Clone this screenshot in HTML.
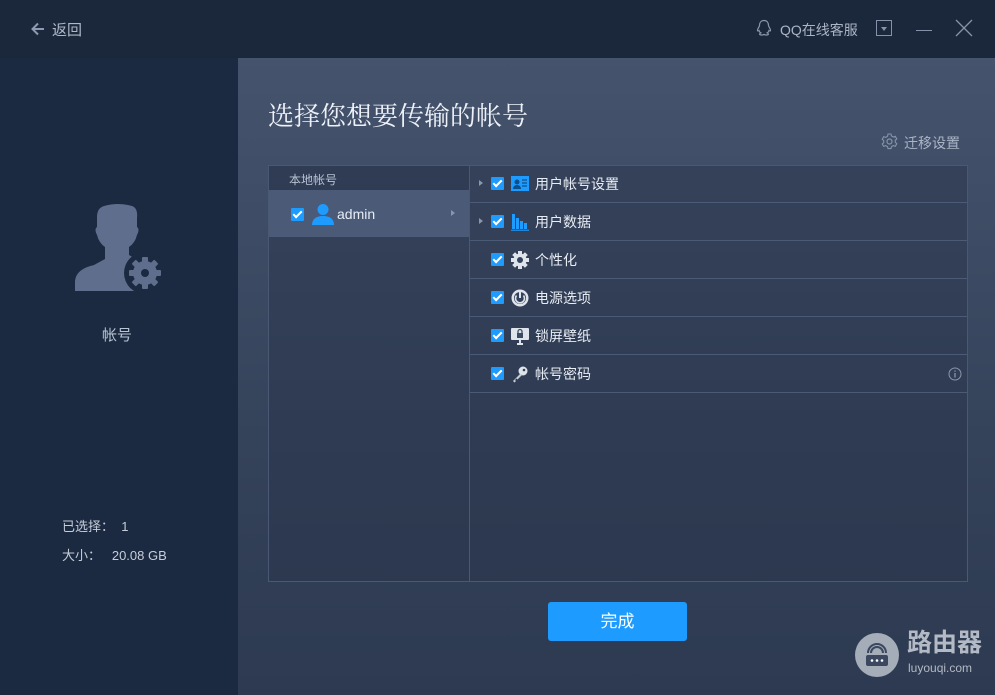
<!DOCTYPE html><html><head><meta charset="utf-8"><style>
*{margin:0;padding:0;box-sizing:border-box}
body{width:995px;height:695px;overflow:hidden;background:#1b273b;font-family:"Liberation Sans","Noto Sans CJK SC",sans-serif;position:relative;color:#fff}
.abs{position:absolute}
.panel{left:238px;top:58px;width:757px;height:637px;background:linear-gradient(#45536d,#34425a 60%,#2d3a51)}
.side{left:0;top:58px;width:238px;height:637px;background:#1b2a41}
.tbl{left:268px;top:165px;width:700px;height:417px;border:1px solid #4a5874;background:rgba(40,52,74,.45)}
.cb{display:inline-block;width:13px;height:13px;background:#1e9bff;border-radius:1px;position:relative}
.cb:after{content:"";position:absolute;left:4px;top:1px;width:3px;height:7px;border:solid #fff;border-width:0 2px 2px 0;transform:rotate(45deg)}
.row{position:absolute;left:201px;width:497px;height:38px;border-bottom:1px solid #4b5a75;font-size:14px;color:#e8edf5}
.row .cb{position:absolute;left:21px;top:12px}
.row .ic{position:absolute;left:41px;top:10px;width:18px;height:18px}
.row .t{position:absolute;left:65px;top:9px}
.tri{position:absolute;left:9px;top:15px;border-left:4px solid #8a96aa;border-top:3.5px solid transparent;border-bottom:3.5px solid transparent}
</style></head><body>
<div class="abs side"></div>
<div class="abs panel"></div>
<svg class="abs" style="left:30px;top:21px" width="16" height="16" viewBox="0 0 16 16"><path d="M14 8H3M8 2.5L2.5 8 8 13.5" stroke="#8e9ab0" stroke-width="2" fill="none"/></svg>
<div class="abs" style="left:52px;top:19px;font-size:15px;color:#aeb8c8">返回</div>
<svg class="abs" style="left:755px;top:19px" width="18" height="19" viewBox="0 0 18 19"><path d="M9 1.5c-3 0-4.5 2.3-4.5 5 0 1-1.5 2.5-2 4.5 0 1.5 1 1 1.5.5.3 1 1 2 1.8 2.4-1 .5-1.5 1.3-.8 1.8 1 .6 3 .3 4-.3 1 .6 3 .9 4 .3.7-.5.2-1.3-.8-1.8.8-.4 1.5-1.4 1.8-2.4.5.5 1.5 1 1.5-.5-.5-2-2-3.5-2-4.5 0-2.7-1.5-5-4.5-5z" stroke="#8a97ad" stroke-width="1.2" fill="none"/></svg>
<div class="abs" style="left:780px;top:20px;font-size:14px;color:#aab5c6">QQ在线客服</div>
<div class="abs" style="left:876px;top:20px;width:16px;height:16px;border:1px solid #8593aa"></div>
<div class="abs" style="left:881px;top:27px;border-top:4px solid #8593aa;border-left:3px solid transparent;border-right:3px solid transparent"></div>
<div class="abs" style="left:916px;top:30px;width:16px;height:1px;background:#8593aa"></div>
<svg class="abs" style="left:955px;top:19px" width="18" height="18"><path d="M1 1L17 17M17 1L1 17" stroke="#8593aa" stroke-width="1.3"/></svg>
<svg class="abs" style="left:74px;top:203px" width="90" height="90" viewBox="0 0 90 90"><path d="M30 3Q44 -1 58 3Q64 5 63 15L63 24Q66 26 63 32Q61 40 55 44L55 52L62 56L62 88L1 88L1 78Q2 66 20 62L31 56L31 44Q25 40 23 32Q20 26 23 24L23 14Q23 5 30 3Z" fill="#5e6e8c"/><circle cx="71" cy="70" r="21" fill="#1b2a41"/><g fill="#5e6e8c"><circle cx="71" cy="70" r="12"/><rect x="68" y="54" width="6" height="32" rx="1"/><rect x="55" y="67" width="32" height="6" rx="1"/><rect x="68" y="54" width="6" height="32" rx="1" transform="rotate(45 71 70)"/><rect x="68" y="54" width="6" height="32" rx="1" transform="rotate(-45 71 70)"/></g><circle cx="71" cy="70" r="4" fill="#1b2a41"/></svg>
<div class="abs" style="left:102px;top:324px;font-size:15px;color:#b8c3d3">帐号</div>
<div class="abs" style="left:62px;top:516px;font-size:13px;color:#c5cdd9">已选择：&nbsp;&nbsp;1</div>
<div class="abs" style="left:62px;top:545px;font-size:13px;color:#c5cdd9">大小：&nbsp;&nbsp;&nbsp;20.08 GB</div>
<div class="abs" style="left:268px;top:96px;font-size:26px;color:#eef2f8;font-family:'Noto Serif CJK SC','Liberation Serif',serif">选择您想要传输的帐号</div>
<svg class="abs" style="left:881px;top:133px" width="17" height="17" viewBox="0 0 17 17"><circle cx="8.5" cy="8.5" r="2.5" stroke="#8693a8" fill="none" stroke-width="1.2"/><path d="M7 1h3l.5 2 1.8 1 2-.7 1.5 2.6-1.5 1.4v2l1.5 1.4-1.5 2.6-2-.7-1.8 1-.5 2H7l-.5-2-1.8-1-2 .7L1.2 11l1.5-1.4v-2L1.2 6.3 2.7 3.7l2 .7 1.8-1z" stroke="#8693a8" fill="none" stroke-width="1.1"/></svg>
<div class="abs" style="left:904px;top:133px;font-size:14px;color:#aab5c6">迁移设置</div>
<div class="abs tbl">
 <div class="abs" style="left:0;top:0;width:200px;height:24px;background:#2f3c54;font-size:12px;color:#b8c2d2;padding:5px 0 0 20px">本地帐号</div>
 <div class="abs" style="left:0;top:24px;width:200px;height:47px;background:#4a5a77"></div>
 <span class="cb abs" style="left:22px;top:42px"></span>
 <svg class="abs" style="left:42px;top:37px" width="24" height="22" viewBox="0 0 24 22"><circle cx="12" cy="6.5" r="5.5" fill="#1e9bff"/><path d="M1 22c0-6 4-9 11-9s11 3 11 9z" fill="#1e9bff"/></svg>
 <div class="abs" style="left:68px;top:40px;font-size:14px;color:#e8edf5">admin</div>
 <div class="abs" style="left:182px;top:44px;border-left:4px solid #8a96aa;border-top:3.5px solid transparent;border-bottom:3.5px solid transparent"></div>
 <div class="abs" style="left:200px;top:0;width:1px;height:415px;background:#4a5874"></div>
 <div class="row" style="top:-1px"><i class="tri"></i><span class="cb"></span><svg class="ic" viewBox="0 0 18 18"><rect x="0" y="1" width="18" height="15" fill="#1e9bff"/><circle cx="6" cy="7" r="2.5" fill="#0d4f8a"/><path d="M2 14c0-3 2-4 4-4s4 1 4 4z" fill="#0d4f8a"/><path d="M11 5h5M11 8h5M11 11h5" stroke="#0d4f8a" stroke-width="1.3"/></svg><span class="t">用户帐号设置</span></div>
 <div class="row" style="top:37px"><i class="tri"></i><span class="cb"></span><svg class="ic" viewBox="0 0 18 18"><path d="M1 1h3v15H1zM5 5h3v11H5zM9 8h3v8H9zM13 10h3v6h-3z" fill="#1e9bff"/><path d="M0 17.3h18" stroke="#1e9bff"/></svg><span class="t">用户数据</span></div>
 <div class="row" style="top:75px"><span class="cb"></span><svg class="ic" viewBox="0 0 18 18"><circle cx="9" cy="9" r="6.5" fill="#dfe4ec"/><g fill="#dfe4ec"><rect x="7" y="0" width="4" height="18"/><rect x="0" y="7" width="18" height="4"/><rect x="7" y="0" width="4" height="18" transform="rotate(45 9 9)"/><rect x="7" y="0" width="4" height="18" transform="rotate(-45 9 9)"/></g><circle cx="9" cy="9" r="3" fill="#34425b"/></svg><span class="t">个性化</span></div>
 <div class="row" style="top:113px"><span class="cb"></span><svg class="ic" viewBox="0 0 18 18"><circle cx="9" cy="9" r="8.5" fill="#dfe4ec"/><circle cx="9" cy="9" r="6" fill="#34425b"/><path d="M5.5 6.5a4.5 4.5 0 1 0 7 0" stroke="#dfe4ec" stroke-width="1.6" fill="none"/><path d="M9 3v6" stroke="#dfe4ec" stroke-width="2"/></svg><span class="t">电源选项</span></div>
 <div class="row" style="top:151px"><span class="cb"></span><svg class="ic" viewBox="0 0 18 18"><rect x="0" y="1" width="18" height="12" rx="1" fill="#dfe4ec"/><path d="M6 17h6M9 13v4" stroke="#dfe4ec" stroke-width="2"/><rect x="6" y="6" width="6" height="5" fill="#3b4a63"/><path d="M7 6V4.5a2 2 0 0 1 4 0V6" stroke="#3b4a63" stroke-width="1.3" fill="none"/></svg><span class="t">锁屏壁纸</span></div>
 <div class="row" style="top:189px"><span class="cb"></span><svg class="ic" viewBox="0 0 18 18"><circle cx="12" cy="6" r="4.5" fill="#dfe4ec"/><circle cx="13" cy="5" r="1.3" fill="#34425b"/><path d="M9 9L2 16l1.5 1.5 1.5-1.5-1-1 1.5-1.5 1 1 5-5" fill="#c9ced6"/></svg><span class="t">帐号密码</span>
  <svg style="position:absolute;left:478px;top:12px" width="14" height="14"><circle cx="7" cy="7" r="6" stroke="#8a96aa" fill="none"/><path d="M7 6v4.5M7 3.5v1.2" stroke="#8a96aa" stroke-width="1.3"/></svg></div>
</div>
<div class="abs" style="left:548px;top:602px;width:139px;height:39px;background:#1e9bff;border-radius:3px;font-size:17px;color:#fff;text-align:center;line-height:39px">完成</div>
<div class="abs" style="left:855px;top:633px;width:44px;height:44px;border-radius:50%;background:#a5adb9"></div>
<svg class="abs" style="left:863px;top:640px" width="28" height="30" viewBox="0 0 28 30"><path d="M8 13a6 6 0 0 1 12 0M5 13a9 9 0 0 1 18 0" stroke="#3b4860" stroke-width="2" fill="none"/><rect x="3" y="15" width="22" height="11" rx="2" fill="#3b4860"/><circle cx="9" cy="20.5" r="1.3" fill="#fff"/><circle cx="14" cy="20.5" r="1.3" fill="#fff"/><circle cx="19" cy="20.5" r="1.3" fill="#fff"/></svg>
<div class="abs" style="left:907px;top:627px;font-size:25px;line-height:32px;color:#b3bac5;font-weight:bold">路由器</div>
<div class="abs" style="left:908px;top:661px;font-size:12px;line-height:14px;color:#b3bac5">luyouqi.com</div>
</body></html>
